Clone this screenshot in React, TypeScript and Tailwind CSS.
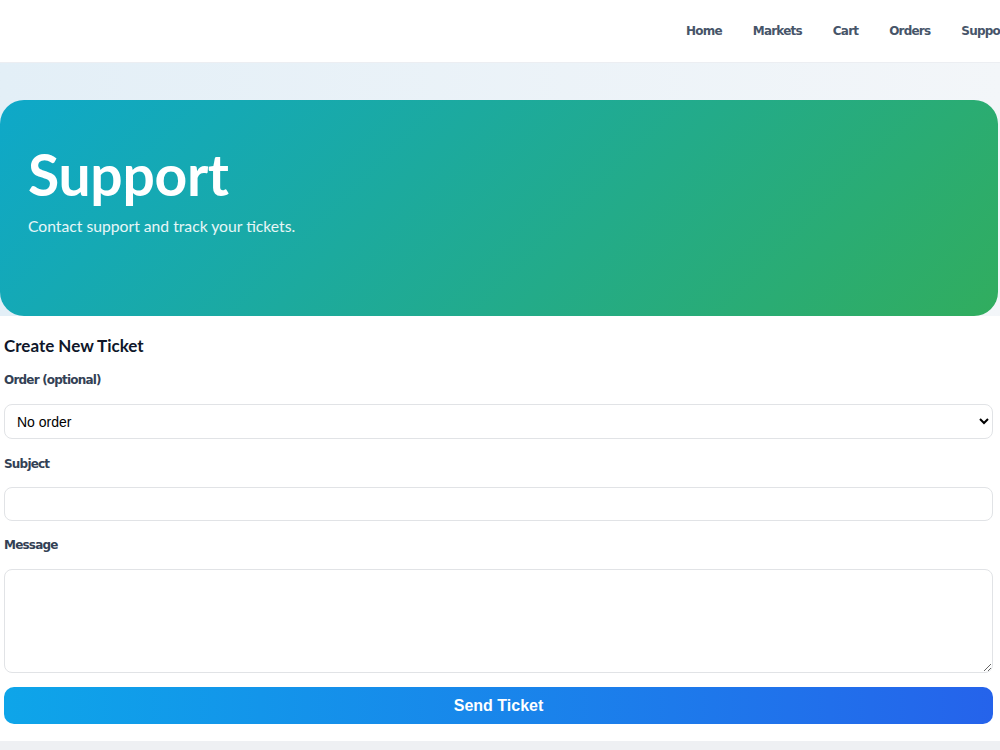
import React from "react";

export default function App() {
  const nav = ["Home", "Markets", "Cart", "Orders", "Support"];
  const labelFont = { fontFamily: "'DejaVu Sans', Verdana, Tahoma, sans-serif" };
  return (
    <div className="min-h-[750px] w-[1000px] overflow-hidden bg-[#eef0f3]" style={{ fontFamily: "Lato, 'Open Sans', sans-serif" }}>
      <header className="flex h-[63px] items-center justify-end border-b border-[#eceef2] bg-white">
        <nav className="flex shrink-0 translate-x-[10px] items-center gap-[31px]" style={labelFont}>
          {nav.map((n) => (
            <span key={n} className="text-[12px] font-bold tracking-[-0.8px] text-[#475569]">{n}</span>
          ))}
        </nav>
      </header>
      <div className="bg-gradient-to-r from-[#e3eff7] to-[#f3f6f9] pt-[37px] pr-[2px]">
        <section className="flex h-[216px] flex-col rounded-[24px] bg-[linear-gradient(135deg,#0ea8c9,#31ad5e)] pl-[28px] pt-[38px] text-white">
          <h1 className="text-[57px] font-bold leading-[72px] tracking-[-0.3px]">Support</h1>
          <p className="mt-[5px] text-[15.7px] text-white/90">Contact support and track your tickets.</p>
        </section>
      </div>
      <main className="flex flex-col bg-white pl-[4px] pr-[7px] pt-[20px] pb-[17px]">
        <h2 className="text-[17px] font-bold leading-[20px] text-[#0f172a]">Create New Ticket</h2>
        <label className="mt-[18px] text-[12px] font-bold leading-[13px] tracking-[-0.8px] text-[#334155]" style={labelFont}>Order (optional)</label>
        <select className="mt-[17px] h-[35px] rounded-[8px] border border-[#e1e3e6] bg-white px-[8px] text-[14px] text-black" style={{ fontFamily: "'Liberation Sans', Arial, sans-serif" }}>
          <option>No order</option>
        </select>
        <label className="mt-[19px] text-[12px] font-bold leading-[13px] tracking-[-0.8px] text-[#334155]" style={labelFont}>Subject</label>
        <input className="mt-[16px] h-[34px] rounded-[8px] border border-[#e1e3e6] bg-white px-[12px] text-[14px]" />
        <label className="mt-[18px] text-[12px] font-bold leading-[13px] tracking-[-0.8px] text-[#334155]" style={labelFont}>Message</label>
        <textarea className="mt-[17px] h-[104px] rounded-[8px] border border-[#e1e3e6] bg-white px-[12px] py-[8px] text-[14px]" />
        <button className="mt-[14px] h-[37px] rounded-[10px] bg-gradient-to-r from-[#0ea5e9] to-[#2563eb] text-[16px] font-bold text-white" style={{ fontFamily: "'Liberation Sans', Arial, sans-serif" }}>Send Ticket</button>
      </main>
    </div>
  );
}
